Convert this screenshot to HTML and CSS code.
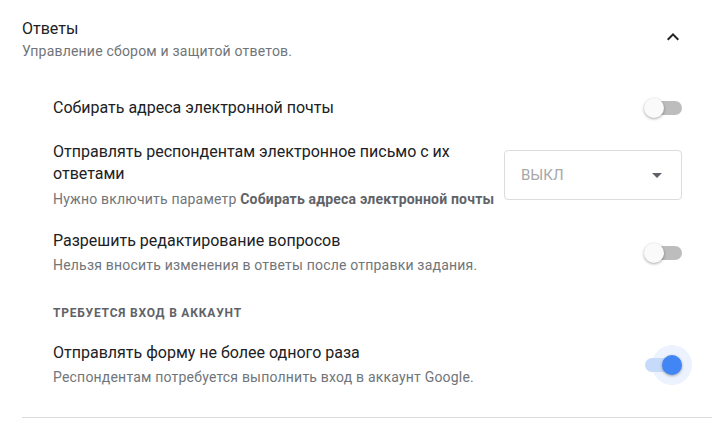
FILE: index.html
```html
<!DOCTYPE html>
<html lang="ru">
<head>
<meta charset="utf-8">
<link rel="stylesheet" href="styles.css">
</head>
<body>
<section class="panel">
  <div class="head">
    <div>
      <div class="title">Ответы</div>
      <div class="subtitle">Управление сбором и защитой ответов.</div>
    </div>
    <svg class="chevron" viewBox="0 0 24 24" width="24" height="24"><path d="M12 8l-6 6 1.41 1.41L12 10.83l4.59 4.58L18 14z" fill="#202124"/></svg>
  </div>
  <div class="rows">
    <div class="row r1">
      <div class="text">
        <div class="label">Собирать адреса электронной почты</div>
      </div>
      <div class="toggle"><span class="track"></span><span class="thumb"></span></div>
    </div>
    <div class="row r2">
      <div class="text">
        <div class="label">Отправлять респондентам электронное письмо с их ответами</div>
        <div class="hint">Нужно включить параметр <b>Собирать адреса электронной почты</b></div>
      </div>
      <div class="select">
        <span>ВЫКЛ</span>
        <svg viewBox="0 0 24 24" width="24" height="24"><path d="M7 10l5 5 5-5z" fill="#5f6368"/></svg>
      </div>
    </div>
    <div class="row r3">
      <div class="text">
        <div class="label">Разрешить редактирование вопросов</div>
        <div class="hint">Нельзя вносить изменения в ответы после отправки задания.</div>
      </div>
      <div class="toggle"><span class="track"></span><span class="thumb"></span></div>
    </div>
    <div class="section">ТРЕБУЕТСЯ ВХОД В АККАУНТ</div>
    <div class="row r4">
      <div class="text">
        <div class="label">Отправлять форму не более одного раза</div>
        <div class="hint">Респондентам потребуется выполнить вход в аккаунт Google.</div>
      </div>
      <div class="toggle on"><span class="halo"></span><span class="track"></span><span class="thumb"></span></div>
    </div>
  </div>
  <div class="divider"></div>
</section>
</body>
</html>
```
FILE: styles.css
```css
html, body {
  margin: 0;
  padding: 0;
  background: #fff;
}
body {
  font-family: Roboto, "Liberation Sans", Arial, sans-serif;
  color: #202124;
}
.panel {
  padding: 18px 16px 0 22px;
}
.head {
  display: flex;
  justify-content: space-between;
  align-items: flex-start;
}
.title {
  font-size: 16px;
  line-height: 22px;
  color: #202124;
}
.subtitle {
  font-size: 14px;
  line-height: 20px;
  letter-spacing: 0.2px;
  margin-top: 1px;
  color: #70757a;
}
.chevron {
  margin-top: 7px;
  margin-right: 27px;
}
.rows {
  padding: 36px 30px 0 31px;
  display: flex;
  flex-direction: column;
}
.row {
  display: flex;
  align-items: center;
  justify-content: space-between;
}
.r2 { margin-top: 22px; }
.r3 { margin-top: 21px; }
.r4 { margin-top: 21px; }
.text {
  flex: 1;
  min-width: 0;
}
.label {
  font-size: 16px;
  line-height: 22px;
  color: #202124;
}
.hint {
  font-size: 14px;
  line-height: 20px;
  letter-spacing: 0.2px;
  color: #70757a;
  margin-top: 3px;
  white-space: nowrap;
}
.r2 .hint { margin-top: 4px; }
.hint b {
  color: #5f6368;
  font-weight: 700;
}
.r2 .label { max-width: 430px; }
.select {
  flex: none;
  height: 48px;
  width: 148px;
  border: 1px solid #dadce0;
  border-radius: 4px;
  margin-left: 10px;
  display: flex;
  align-items: center;
  justify-content: space-between;
  padding: 0 12px 0 16px;
}
.select span {
  font-size: 15px;
  color: #a8a8a8;
}
.section {
  margin-top: 30px;
  font-size: 12px;
  line-height: 16px;
  font-weight: 700;
  letter-spacing: 0.8px;
  color: #5f6368;
}
.toggle {
  flex: none;
  position: relative;
  width: 38px;
  height: 20px;
}
.toggle .track {
  position: absolute;
  left: 3px;
  right: 0;
  top: 3px;
  height: 14px;
  border-radius: 7px;
  background: #bdbdbd;
}
.toggle .thumb {
  position: absolute;
  left: 0;
  top: 0;
  width: 20px;
  height: 20px;
  border-radius: 50%;
  background: #fafafa;
  box-shadow: 0 1px 3px rgba(0,0,0,.35);
}
.toggle.on .track {
  left: 1px;
  right: 2px;
  background: #c6dafc;
}
.toggle.on .thumb {
  left: auto;
  right: 0;
  background: #4285f4;
}
.toggle.on .halo {
  position: absolute;
  right: -10px;
  top: -10px;
  width: 40px;
  height: 40px;
  border-radius: 50%;
  background: rgba(66,133,244,.1);
}
.divider {
  margin-top: 30px;
  height: 1px;
  background: #dadce0;
}
```
